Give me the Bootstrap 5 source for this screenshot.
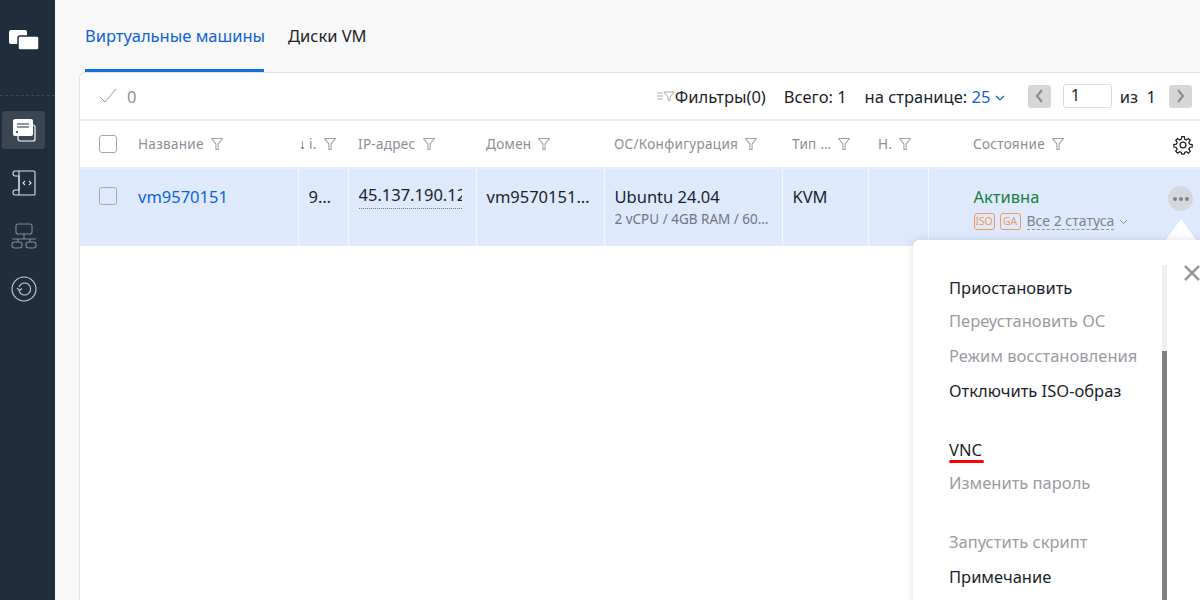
<!DOCTYPE html>
<html lang="ru"><head><meta charset="utf-8"><title>VM</title>
<link rel="stylesheet" href="https://cdn.jsdelivr.net/npm/bootstrap@5.3.0/dist/css/bootstrap.min.css">
<style>
html,body{height:100%;overflow:hidden}
body{font-family:"Noto Sans","Open Sans",sans-serif;font-size:16.5px;color:#1a1f2b;background:#f8f8f8}
.shell{height:600px;width:1200px;overflow:hidden;position:relative}
.rail{width:55px;background:#1f2d3d;flex:none}
.rail-logo{height:96px;border-bottom:1px dashed #3b4856;padding:26px 0 0 8px}
.rail-item{width:43px;height:38px;margin:15px 0 0 2px;display:flex;align-items:center;justify-content:center;border-radius:3px}
.rail-item.on{background:#3a4653}
.main{flex:1;min-width:0;padding-left:24px}
.tabs{height:72px;gap:24px;padding-left:6px}
.tab-item{line-height:72px;height:72px;color:#1a1f2b;white-space:nowrap;text-decoration:none}
.tab-item.on{color:#0f62d6;border-bottom:3px solid #0f73e6;width:179px}
.tab-item:hover{color:#0f62d6}
.panel{background:#fff;border:1px solid #e3e3e3;border-right:0;border-radius:6px 0 0 0;height:540px}
.toolbar{height:48px;border-bottom:2px solid #eee;padding:0 8px 0 19px;margin:0}
.count{color:#8a8f98;margin-left:10px}
.tb-txt{padding-top:2px}
.pg-btn{width:23px;height:23px;background:#d6d6d6;border-radius:3px;display:flex;align-items:center;justify-content:center}
.pg-input{width:49px;height:24px;border:1px solid #ddd;border-radius:3px;padding-left:7px;line-height:20px}
.vm-table{table-layout:fixed;width:1121px;margin:0;border-collapse:collapse}
.vm-table th,.vm-table td{padding:0 0 0 10px;border:0;box-shadow:none;background:transparent;white-space:nowrap;overflow:hidden}
.vm-table th{height:47px;font-weight:400;font-size:13.5px;color:#8a8f98;border-bottom:2px solid #eee;letter-spacing:.3px;vertical-align:middle}
.vm-table td{height:78px;vertical-align:top;padding-top:16px;background:#dfe9fd;border-right:1px dotted #e6eefd;color:#1a1f2b;font-size:16.5px}
.vm-table td:first-child,.vm-table td:nth-last-child(-n+2){border-right:0}
.vm-table th.id-head{padding-left:1px}
.vm-table th.gear-head{padding-left:20px}
.box{display:block;width:18px;height:18px;border:1px solid #a4a7ab;border-radius:3px;margin-left:9px}
td .box{margin-top:2px}
.cell-dot{border-bottom:1px dotted #777;display:block;line-height:19px;height:24px;width:103px;overflow:hidden}
.subline{font-size:13.5px;color:#6f7580;line-height:18px;overflow:hidden;text-overflow:ellipsis;width:156px}
.vm-link{color:#0f62d6;text-decoration:none}
.ok{color:#17803d;line-height:23px}
.tag{display:inline-block;border:1px solid #f0995a;color:#f0995a;border-radius:3px;font-size:10.5px;line-height:15px;width:21px;text-align:center;margin-right:5px;height:17px;vertical-align:1px;letter-spacing:-.2px}
.all-st{font-size:14px;color:#7d828c;border-bottom:1px dashed #8f939b;line-height:16px;display:inline-block;margin-left:1px}
.sort-a{color:#444;margin-right:3px}
.dots{position:absolute;left:1168px;top:186px;width:25px;height:25px;border-radius:50%;background:#d4d7dd;display:flex;align-items:center;justify-content:center;gap:2px}
.dots i{width:4px;height:4px;border-radius:50%;background:#7d828c;display:block}
.popup{position:absolute;left:913px;top:240px;width:300px;height:380px;background:#fff;border-radius:6px;box-shadow:0 0 8px rgba(0,0,0,.13);padding-left:36px}
.arrow{position:absolute;left:1165px;top:219px;width:0;height:0;border-left:16px solid transparent;border-right:16px solid transparent;border-bottom:22px solid #fff}
.menu-row{height:34px;line-height:34px;font-size:16.5px;color:#1a1f2b;position:absolute;left:36px;white-space:nowrap}
.menu-row.off{color:#9a9ca1}
.redline{position:absolute;left:36px;top:220px;width:35px;height:3px;background:#f00;border-radius:2px}
.track{position:absolute;left:249px;top:25px;width:5px;height:355px;background:#f0f0f0}
.thumb{position:absolute;left:249px;top:111px;width:5px;height:269px;background:#7f7f7f}
.closer{position:absolute;left:1184px;top:265px}
.w1{width:48px}.w2{width:170px}.w3{width:50px}.w4{width:128px}.w5{width:128px}.w6{width:178px}.w7{width:86px}.w8{width:60px}.w9{width:225px}.w10{width:48px}
.fl{margin-left:7px;vertical-align:-1px}
.ps-name{padding-left:45px!important}
.top-a{top:31px}.top-b{top:64px}.top-c{top:99px}.top-d{top:134px}.top-e{top:193px}.top-f{top:226px}.top-g{top:285px}.top-h{top:320px}
.gap-a{margin-left:18px}.gap-b{margin-left:12px}.gap-c{margin-left:8px}.gap-d{margin-left:13px}.gap-e{margin-left:23px}
</style></head><body>
<div class="shell d-flex">
<aside class="rail">
 <div class="rail-logo"><svg width="32" height="22" viewBox="0 0 32 22"><rect x="1" y="1" width="18" height="14" rx="2" fill="#fff"/><rect x="10" y="7" width="21" height="14" rx="2" fill="#fff" stroke="#1f2d3d" stroke-width="1.5"/></svg></div>
 <div class="rail-item on"><svg width="26" height="26" viewBox="0 0 26 26" fill="none"><rect x="7" y="8" width="17" height="16" rx="2" stroke="#fff" stroke-width="1.2"/><rect x="2" y="2" width="20" height="17" rx="2" fill="#fff"/><path d="M6 7h12M6 10h12" stroke="#1f2d3d" stroke-width="1.2"/><circle cx="6" cy="15" r="1" fill="#1f2d3d"/></svg></div>
 <div class="rail-item"><svg width="26" height="26" viewBox="0 0 26 26" fill="none" stroke="#dfe2e5" stroke-width="1.1"><path d="M8 1h15a1 1 0 0 1 1 1v22a1 1 0 0 1-1 1H4c-1.500 0-2-1-2-2.500S3 20 4 20h4V6H4C3 6 2 5 2 3.500S3 1 4 1h4"/><path d="M8 1v24M14 11l-2 2 2 2M18 11l2 2-2 2"/></svg></div>
 <div class="rail-item"><svg width="26" height="26" viewBox="0 0 26 26" fill="none" stroke="#7f8a96" stroke-width="1.1"><rect x="5" y="1" width="16" height="10" rx="2"/><path d="M1 16h24M13 11v5M7 16v3M19 16v3"/><rect x="1" y="19" width="10" height="6" rx="2.500"/><rect x="15" y="19" width="10" height="6" rx="2.500"/></svg></div>
 <div class="rail-item"><svg width="26" height="26" viewBox="0 0 26 26" fill="none" stroke="#c8ccd1" stroke-width="1.1"><circle cx="13" cy="13" r="12"/><path d="M8 11a6 6 0 1 1 0 4M6 12l2.500 2.500 2.500-2"/></svg></div>
</aside>
<main class="main">
 <nav class="tabs d-flex"><a class="tab-item on">Виртуальные машины</a><a class="tab-item">Диски VM</a></nav>
 <section class="panel">
  <div class="toolbar d-flex align-items-center">
   <svg width="18" height="16" viewBox="0 0 18 16" fill="none" stroke="#9a9da3"><path d="M1 9l5 5L17 1"/></svg>
   <span class="count tb-txt">0</span>
   <span class="ms-auto d-flex align-items-center tb-txt"><svg width="18" height="12" viewBox="0 0 18 12" fill="none" stroke="#a8abaf"><path d="M0 2h6M0 5h6M0 8h6M7 1h10l-4 5v4l-2-1V6z"/></svg>Фильтры(0)</span>
   <span class="gap-a tb-txt">Всего: 1</span>
   <span class="gap-a tb-txt">на странице: <span class="vm-link">25</span> <svg width="10" height="7" viewBox="0 0 10 7" fill="none" stroke="#0f62d6" stroke-width="1.2"><path d="M1 1l4 4 4-4"/></svg></span>
   <span class="pg-btn gap-e"><svg width="9" height="14" viewBox="0 0 9 14" fill="none" stroke="#8a8a8a" stroke-width="2"><path d="M7 1L2 7l5 6"/></svg></span>
   <span class="pg-input gap-b">1</span>
   <span class="gap-c tb-txt">из&nbsp; 1</span>
   <span class="pg-btn gap-d"><svg width="9" height="14" viewBox="0 0 9 14" fill="none" stroke="#8a8a8a" stroke-width="2"><path d="M2 1l5 6-5 6"/></svg></span>
  </div>
  <table class="table vm-table">
   <colgroup><col class="w1"><col class="w2"><col class="w3"><col class="w4"><col class="w5"><col class="w6"><col class="w7"><col class="w8"><col class="w9"><col class="w10"></colgroup>
   <thead><tr>
    <th><span class="box"></span></th>
    <th>Название<svg class="fl" width="12" height="12" viewBox="0 0 11 11" fill="none" stroke="#a0a3a8"><path d="M.5.5h10L6.500 5.500v5h-2v-5z"/></svg></th>
    <th class="id-head"><span class="sort-a">↓</span>i.<svg class="fl" width="12" height="12" viewBox="0 0 11 11" fill="none" stroke="#a0a3a8"><path d="M.5.5h10L6.500 5.500v5h-2v-5z"/></svg></th>
    <th>IP-адрес<svg class="fl" width="12" height="12" viewBox="0 0 11 11" fill="none" stroke="#a0a3a8"><path d="M.5.5h10L6.500 5.500v5h-2v-5z"/></svg></th>
    <th>Домен<svg class="fl" width="12" height="12" viewBox="0 0 11 11" fill="none" stroke="#a0a3a8"><path d="M.5.5h10L6.500 5.500v5h-2v-5z"/></svg></th>
    <th>ОС/Конфигурация<svg class="fl" width="12" height="12" viewBox="0 0 11 11" fill="none" stroke="#a0a3a8"><path d="M.5.5h10L6.500 5.500v5h-2v-5z"/></svg></th>
    <th>Тип …<svg class="fl" width="12" height="12" viewBox="0 0 11 11" fill="none" stroke="#a0a3a8"><path d="M.5.5h10L6.500 5.500v5h-2v-5z"/></svg></th>
    <th>Н.<svg class="fl" width="12" height="12" viewBox="0 0 11 11" fill="none" stroke="#a0a3a8"><path d="M.5.5h10L6.500 5.500v5h-2v-5z"/></svg></th>
    <th class="ps-name">Состояние<svg class="fl" width="12" height="12" viewBox="0 0 11 11" fill="none" stroke="#a0a3a8"><path d="M.5.5h10L6.500 5.500v5h-2v-5z"/></svg></th>
    <th class="gear-head"><svg width="20" height="20" viewBox="0 0 24 24" fill="none" stroke="#222" stroke-width="1.500"><circle cx="12" cy="12" r="3.500"/><path d="M10.500 2h3l.5 3 2 1 2.500-1.700 2.200 2.200L19 9l1 2 3 .5v3l-3 .5-1 2 1.700 2.500-2.200 2.200L16 20l-2 1-.5 2h-3l-.5-2-2-1-2.500 1.700-2.200-2.200L5 17l-1-2-3-.5v-3l3-.5 1-2-1.700-2.500 2.200-2.200L8 6l2-1z"/></svg></th>
   </tr></thead>
   <tbody><tr>
    <td><span class="box"></span></td>
    <td><a class="vm-link">vm9570151</a></td>
    <td>9…</td>
    <td><span class="cell-dot">45.137.190.12</span></td>
    <td>vm9570151…</td>
    <td>Ubuntu 24.04<div class="subline">2 vCPU / 4GB RAM / 60GB</div></td>
    <td>KVM</td>
    <td></td>
    <td class="ps-name"><div class="ok">Активна</div><span class="tag">ISO</span><span class="tag">GA</span><span class="all-st">Все 2 статуса</span> <svg width="9" height="6" viewBox="0 0 9 6" fill="none" stroke="#8a8f98"><path d="M1 1l3.500 3.500L8 1"/></svg></td>
    <td></td>
   </tr></tbody>
  </table>
 </section>
</main>
<span class="dots"><i></i><i></i><i></i></span>
<span class="arrow"></span>
<div class="popup">
 <span class="menu-row top-a">Приостановить</span>
 <span class="menu-row off top-b">Переустановить ОС</span>
 <span class="menu-row off top-c">Режим восстановления</span>
 <span class="menu-row top-d">Отключить ISO-образ</span>
 <span class="menu-row top-e">VNC</span>
 <span class="redline"></span>
 <span class="menu-row off top-f">Изменить пароль</span>
 <span class="menu-row off top-g">Запустить скрипт</span>
 <span class="menu-row top-h">Примечание</span>
 <span class="track"></span><span class="thumb"></span>
</div>
<svg class="closer" width="16" height="16" viewBox="0 0 16 16" stroke="#9a9a9a" stroke-width="2.500"><path d="M1 1l14 14M15 1L1 15"/></svg>
</div>
</body></html>
